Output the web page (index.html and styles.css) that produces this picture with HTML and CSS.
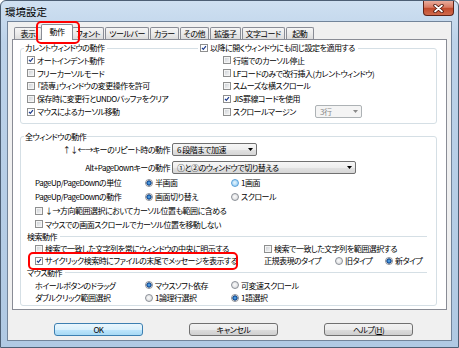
FILE: index.html
```html
<!DOCTYPE html>
<html lang="ja">
<head>
    <meta charset="UTF-8">
    <title>環境設定</title>
    <link rel="stylesheet" href="styles.css">
</head>
<body>
    <div class="window">
        <div class="titlebar">
            <span class="title">環境設定</span>
            <span class="close-btn">
                <svg width="11" height="9" viewBox="0 0 11 9">
                    <path d="M2 1.5 L9 7.5 M9 1.5 L2 7.5" stroke="#4a1208" stroke-width="3.4" stroke-linecap="round"/>
                    <path d="M2 1.5 L9 7.5 M9 1.5 L2 7.5" stroke="#fff" stroke-width="1.7" stroke-linecap="round"/>
                </svg>
            </span>
        </div>
        <div class="client">
            <div class="tabs">
                <span class="tab">表示</span>
                <span class="tab active">動作</span>
                <span class="tab">フォント</span>
                <span class="tab">ツールバー</span>
                <span class="tab">カラー</span>
                <span class="tab">その他</span>
                <span class="tab">拡張子</span>
                <span class="tab">文字コード</span>
                <span class="tab">起動</span>
            </div>
            <div class="panel">
                <fieldset class="group group-current">
                    <legend>
                        <div class="legend-row">
                            <div class="legend-main">カレントウィンドウの動作<span class="legend-line"></span></div>
                            <label class="chk"><span class="box on"><svg viewBox="0 0 8 8"><path d="M1.3 3.8 L3.1 5.8 L6.6 1.4"/></svg></span>以降に開くウィンドウにも同じ設定を適用する</label>
                        </div>
                    </legend>
                    <div class="cols">
                        <div class="col">
                            <label class="chk line"><span class="box on"><svg viewBox="0 0 8 8"><path d="M1.3 3.8 L3.1 5.8 L6.6 1.4"/></svg></span>オートインデント動作</label>
                            <label class="chk line"><span class="box"></span>フリーカーソルモード</label>
                            <label class="chk line"><span class="box"></span>「読専」ウィンドウの変更操作を許可</label>
                            <label class="chk line"><span class="box"></span>保存時に変更行とUNDOバッファをクリア</label>
                            <label class="chk line"><span class="box on"><svg viewBox="0 0 8 8"><path d="M1.3 3.8 L3.1 5.8 L6.6 1.4"/></svg></span>マウスによるカーソル移動</label>
                        </div>
                        <div class="col">
                            <label class="chk line"><span class="box"></span>行端でのカーソル停止</label>
                            <label class="chk line"><span class="box"></span>LFコードのみで改行挿入(カレントウィンドウ)</label>
                            <label class="chk line"><span class="box"></span>スムーズな横スクロール</label>
                            <label class="chk line"><span class="box on"><svg viewBox="0 0 8 8"><path d="M1.3 3.8 L3.1 5.8 L6.6 1.4"/></svg></span>JIS罫線コードを使用</label>
                            <div class="line margin-row">
                                <label class="chk margin-chk"><span class="box"></span>スクロールマージン</label>
                                <span class="combo disabled w-margin">3行<svg class="arrow" viewBox="0 0 5 3"><path d="M0 0 H5 L2.5 3 Z"/></svg></span>
                            </div>
                        </div>
                    </div>
                </fieldset>

                <fieldset class="group group-all">
                    <legend class="plain">全ウィンドウの動作</legend>
                    <div class="body">
                        <div class="row row-combo">
                            <span class="combo-label">↑↓←→キーのリピート時の動作</span>
                            <span class="combo w-accel">6 段階まで加速<svg class="arrow" viewBox="0 0 5 3"><path d="M0 0 H5 L2.5 3 Z"/></svg></span>
                        </div>
                        <div class="row row-combo second">
                            <span class="combo-label">Alt+PageDownキーの動作</span>
                            <span class="combo w-switch">①と②のウィンドウで切り替える<svg class="arrow" viewBox="0 0 5 3"><path d="M0 0 H5 L2.5 3 Z"/></svg></span>
                        </div>
                        <div class="row row-radio first-radio">
                            <span class="opt-label">PageUp/PageDownの単位</span>
                            <span class="opt"><span class="radio on"></span>半画面</span>
                            <span class="opt"><span class="radio hot"></span>1画面</span>
                        </div>
                        <div class="row row-radio">
                            <span class="opt-label">PageUp/PageDownの動作</span>
                            <span class="opt"><span class="radio on"></span>画面切り替え</span>
                            <span class="opt"><span class="radio"></span>スクロール</span>
                        </div>
                        <label class="row row-check chk"><span class="box"></span>↓→方向範囲選択においてカーソル位置も範囲に含める</label>
                        <label class="row row-check chk"><span class="box"></span>マウスでの画面スクロールでカーソル位置を移動しない</label>

                        <div class="section">検索動作<span class="section-line"></span></div>
                        <div class="row row-tight">
                            <label class="chk split-left"><span class="box"></span>検索で一致した文字列を常にウィンドウの中央に明示する</label>
                            <label class="chk"><span class="box"></span>検索で一致した文字列を範囲選択する</label>
                        </div>
                        <div class="row row-tight">
                            <label class="chk split-left"><span class="box on"><svg viewBox="0 0 8 8"><path d="M1.3 3.8 L3.1 5.8 L6.6 1.4"/></svg></span>サイクリック検索時にファイルの末尾でメッセージを表示する</label>
                            <span class="regex-label">正規表現のタイプ</span>
                            <span class="opt regex-old"><span class="radio"></span>旧タイプ</span>
                            <span class="opt"><span class="radio on"></span>新タイプ</span>
                        </div>

                        <div class="section">マウス動作<span class="section-line"></span></div>
                        <div class="row row-mouse">
                            <span class="opt-label">ホイールボタンのドラッグ</span>
                            <span class="opt"><span class="radio on"></span>マウスソフト依存</span>
                            <span class="opt"><span class="radio"></span>可変速スクロール</span>
                        </div>
                        <div class="row row-mouse">
                            <span class="opt-label">ダブルクリック範囲選択</span>
                            <span class="opt"><span class="radio"></span>1論理行選択</span>
                            <span class="opt"><span class="radio on"></span>1語選択</span>
                        </div>
                    </div>
                </fieldset>
            </div>
            <div class="buttons">
                <button class="btn default">OK</button>
                <button class="btn">キャンセル</button>
                <button class="btn">ヘルプ(<u>H</u>)</button>
            </div>
        </div>

        <!-- red call-out frames drawn over the dialog -->
        <div class="mark mark-tab"></div>
        <div class="mark mark-option"></div>
    </div>
</body>
</html>
```

FILE: styles.css
```css
* {
    box-sizing: border-box;
}
body {
    margin: 0;
    background: #fff;
    font-family: "Noto Sans CJK JP", "Noto Sans", sans-serif;
    font-size: 8px;
    letter-spacing: -0.5px;
    font-feature-settings: "palt";
    color: #000;
}
.window {
    position: relative;
    width: 459px;
    height: 348px;
    border: 1px solid #4d5f74;
    border-radius: 6px 6px 0 0;
    background: linear-gradient(180deg, #cfe0f1 0%, #bcd2e9 12%, #b0c9e3 100%);
    padding: 0 6px 6px;
    display: flex;
    flex-direction: column;
}
.titlebar {
    height: 20px;
    margin: 0 -6px;
    padding: 0 4px;
    display: flex;
    align-items: flex-start;
}
.title {
    font-size: 10.5px;
    letter-spacing: 0;
    line-height: 22px;
    font-feature-settings: normal;
}
.close-btn {
    margin-left: auto;
    width: 31px;
    height: 15px;
    border: 1px solid #5e2318;
    border-top: none;
    border-radius: 0 0 4px 4px;
    background: linear-gradient(180deg, #e9ac9c 0%, #d97a62 45%, #c24a2c 52%, #cf6a4c 100%);
    display: flex;
    align-items: center;
    justify-content: center;
}
.client {
    flex: 1;
    background: #f0f0f0;
    border: 1px solid #72849a;
    padding: 2px 4px 0;
    display: flex;
    flex-direction: column;
}

/* tabs */
.tabs {
    display: flex;
    align-items: flex-end;
    height: 15px;
    padding-left: 2px;
    gap: 1px;
}
.tab {
    min-width: 28px;
    height: 12px;
    padding: 0 3px;
    border: 1px solid #898c95;
    border-bottom: none;
    border-radius: 2px 2px 0 0;
    background: linear-gradient(180deg, #f5f5f5 0%, #ebebeb 50%, #dcdcdc 100%);
    line-height: 11px;
    text-align: center;
    white-space: nowrap;
}
.tab.active {
    position: relative;
    z-index: 1;
    min-width: 32px;
    height: 16px;
    margin: 0 -2px -1px;
    padding: 0 5px;
    background: #fff;
    line-height: 14px;
}
.panel {
    height: 271px;
    border: 1px solid #898c95;
    background: #fff;
    padding: 2px 0 0 7px;
}

/* group boxes */
.group {
    width: 417px;
    margin: 0;
    padding: 0;
    min-width: 0;
    border: 1px solid #d5dfe5;
    border-radius: 3px;
}
.group legend {
    margin-left: 3px;
    padding: 0 1px;
    height: 12px;
    line-height: 12px;
    white-space: nowrap;
}
.legend-row {
    display: flex;
    align-items: center;
    height: 12px;
}
.legend-main {
    display: flex;
    align-items: center;
    width: 175px;
}
.legend-line {
    flex: 1;
    border-top: 1px solid #d5dfe5;
    margin: 0 2px 0 3px;
}
.legend-row .chk {
    padding-right: 2px;
}
.cols {
    display: grid;
    grid-template-columns: 196px 1fr;
    padding: 0 0 5px 6px;
}
.col {
    display: flex;
    flex-direction: column;
}
.line {
    height: 12.8px;
}
.margin-row {
    display: flex;
    align-items: center;
}
.margin-chk {
    width: 92px;
}
.group-all {
    margin-top: 7px;
}
.body {
    padding: 0 9px 1px 14px;
}

/* rows */
.row {
    display: flex;
    align-items: center;
    white-space: nowrap;
}
.row > * {
    flex: none;
}
.row-combo {
    height: 14px;
}
.row-combo.second {
    margin-top: 4px;
}
.combo-label {
    width: 135px;
    text-align: right;
    margin-right: 2px;
}
.row-radio {
    height: 14px;
}
.row-radio.first-radio {
    margin-top: 1px;
}
.row-check {
    height: 13.5px;
}
.row-tight {
    height: 12px;
}
.row-mouse {
    height: 12.5px;
}
.opt-label {
    width: 110px;
}
.opt {
    display: flex;
    align-items: center;
    width: 86px;
}
.split-left {
    width: 229px;
}
.regex-label {
    width: 71px;
}
.regex-old {
    width: 50px;
}
.section {
    display: flex;
    align-items: center;
    height: 12px;
    margin-left: -8px;
}
.section-line {
    flex: 1;
    border-top: 1px solid #d5dfe5;
    margin-left: 3px;
}

/* controls */
.chk {
    display: flex;
    align-items: center;
    white-space: nowrap;
}
.box {
    flex: none;
    width: 8px;
    height: 8px;
    margin-right: 2px;
    border: 1px solid #8e8f8f;
    background: linear-gradient(135deg, #c7cbd0 0%, #e6e8ea 60%, #f7f7f7 100%);
    box-shadow: inset 0 0 0 1px #f4f4f4;
}
.box.on {
    background: #fff;
    box-shadow: none;
}
.box svg {
    display: block;
    width: 6px;
    height: 6px;
}
.box svg path {
    fill: none;
    stroke: #1b3a8c;
    stroke-width: 1.6;
}
.radio {
    flex: none;
    width: 8px;
    height: 8px;
    margin-right: 2px;
    border-radius: 50%;
    border: 1px solid #8b9097;
    background: radial-gradient(circle at 45% 45%, #fbfbfb 0%, #e2e3e5 60%, #c9cbcf 100%);
}
.radio.on {
    background: radial-gradient(circle, #7cc4f4 0, #2b79c7 1.2px, #0f3f86 2.4px, #e6e6e6 2.8px, #f6f6f6 100%);
}
.radio.hot {
    border-color: #5aa0d8;
    background: radial-gradient(circle at 45% 45%, #eaf6fd 0%, #a9d7f6 60%, #78bbec 100%);
}
.combo {
    display: flex;
    align-items: center;
    height: 13px;
    padding: 0 3px 0 4px;
    border: 1px solid #707070;
    border-radius: 2px;
    background: linear-gradient(180deg, #f6f6f6 0%, #eeeeee 50%, #e2e2e2 51%, #d6d6d6 100%);
    white-space: nowrap;
}
.combo .arrow {
    margin-left: auto;
    width: 5px;
    height: 3px;
}
.combo.disabled {
    color: #8a8a8a;
    border-color: #adb2b5;
    background: #f4f4f4;
}
.combo.disabled .arrow {
    fill: #8a8a8a;
}
.w-margin {
    width: 47px;
}
.w-accel {
    width: 85px;
}
.w-switch {
    width: 184px;
}

/* buttons */
.buttons {
    display: flex;
    gap: 46px;
    margin-top: 13px;
    padding-left: 42px;
}
.btn {
    width: 89px;
    height: 13px;
    padding: 0;
    font: inherit;
    letter-spacing: inherit;
    color: #000;
    line-height: 11px;
    border: 1px solid #707070;
    border-radius: 3px;
    background: linear-gradient(180deg, #f2f2f2 0%, #ebebeb 50%, #dddddd 51%, #cfcfcf 100%);
}
.btn.default {
    border-color: #3c7fb1;
    background: linear-gradient(180deg, #eaf6fd 0%, #d9f0fc 50%, #bee6fd 51%, #a7d9f5 100%);
}

/* red call-outs */
.mark {
    position: absolute;
    border: 2px solid #f00;
    border-radius: 5px;
}
.mark-tab {
    left: 35px;
    top: 20px;
    width: 44px;
    height: 23px;
}
.mark-option {
    left: 27px;
    top: 251px;
    width: 210px;
    height: 18px;
}
```
